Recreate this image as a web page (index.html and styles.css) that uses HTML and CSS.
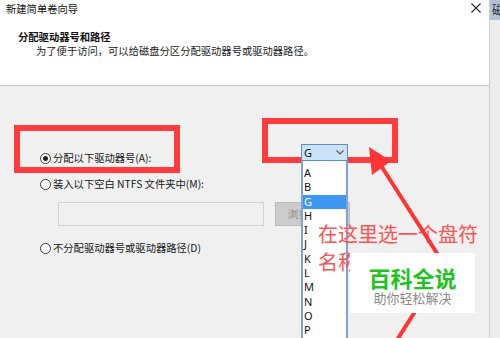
FILE: index.html
```html
<!DOCTYPE html>
<html lang="zh-CN">
<head>
<meta charset="utf-8">
<title>新建简单卷向导</title>
<link rel="stylesheet" href="styles.css">
</head>
<body>
<div class="screen">
  <div class="window">
    <header class="head">
      <div class="titlebar">
        <span class="title">新建简单卷向导</span>
        <svg class="close" width="10" height="10" viewBox="0 0 10 10"><path d="M0.5 0.5 L9.5 9.5 M9.5 0.5 L0.5 9.5" stroke="#2b2b2b" stroke-width="1.1" fill="none"/></svg>
      </div>
      <div class="h-title">分配驱动器号和路径</div>
      <div class="h-sub">为了便于访问，可以给磁盘分区分配驱动器号或驱动器路径。</div>
    </header>
    <main class="body">
      <div class="row1">
        <label class="radio"><span class="circle checked"></span>分配以下驱动器号(A):</label>
        <div class="select"><span>G</span><svg width="8" height="5" viewBox="0 0 8 5"><path d="M0.5 0.5 L4 4 L7.5 0.5" stroke="#555" stroke-width="1.1" fill="none"/></svg></div>
      </div>
      <label class="radio row2"><span class="circle"></span>装入以下空白 NTFS 文件夹中(M):</label>
      <div class="pathrow">
        <div class="input"></div>
        <div class="btn">浏览(R)...</div>
      </div>
      <label class="radio row3"><span class="circle"></span>不分配驱动器号或驱动器路径(D)</label>
    </main>
  </div>
  <div class="side"><div class="side-tab">磁盘</div></div>

  <div class="mark mark-a"></div>
  <div class="mark mark-b"></div>

  <ul class="listbox">
    <li>A</li><li>B</li><li class="sel">G</li><li>H</li><li>I</li><li>J</li><li>K</li><li>L</li><li>M</li><li>N</li><li>O</li><li>P</li><li>Q</li>
  </ul>

  <div class="note">在这里选一个盘符名称</div>

  <svg class="arrow" width="500" height="338" viewBox="0 0 500 338">
    <line x1="380" y1="164" x2="440" y2="258" stroke="#ff3434" stroke-width="4"/>
    <polygon points="369,147 391,161 372,175" fill="#ff3434"/>
    <line x1="416" y1="310" x2="397" y2="340" stroke="#ff3434" stroke-width="4"/>
  </svg>

  <div class="wm">
    <div class="wm-title">百科全说</div>
    <div class="wm-sub">助你轻松解决</div>
  </div>
</div>
</body>
</html>
```

FILE: styles.css
```css
* { box-sizing: border-box; margin: 0; padding: 0; }
body {
  margin: 0;
  width: 500px;
  height: 338px;
  overflow: hidden;
  font-family: "Noto Sans CJK SC", "Noto Sans", sans-serif;
  font-size: 10.3px;
  color: #161616;
}
.screen {
  position: relative;
  display: flex;
  width: 500px;
  height: 338px;
  overflow: hidden;
}
.window {
  width: 489px;
  display: flex;
  flex-direction: column;
  background: #f0f0f0;
}
.head {
  flex: none;
  height: 86px;
  background: #fff;
  border-bottom: 1px solid #c4c4c4;
}
.titlebar {
  display: flex;
  justify-content: space-between;
  align-items: center;
  height: 17px;
  padding: 0 8px 0 6px;
  line-height: 14px;
}
.title { color: #111; }
.close { margin-top: -2px; }
.h-title {
  font-weight: bold;
  margin: 13px 0 0 18px;
  line-height: 14px;
  color: #111;
}
.h-sub {
  margin-left: 36px;
  line-height: 14px;
  color: #222;
}
.body {
  flex: 1;
  padding: 58px 0 0 40px;
}
.row1 {
  display: flex;
  align-items: flex-start;
}
.radio {
  display: flex;
  align-items: center;
  gap: 2px;
  line-height: 14px;
  height: 14px;
  white-space: nowrap;
}
.row1 .radio {
  width: 261px;
  margin-top: 7px;
}
.circle {
  width: 11px;
  height: 11px;
  border: 1px solid #3a3a3a;
  border-radius: 50%;
  background: #fff;
  display: flex;
  align-items: center;
  justify-content: center;
  flex: none;
}
.circle.checked::after {
  content: "";
  width: 5px;
  height: 5px;
  border-radius: 50%;
  background: #222;
}
.select {
  position: relative;
  z-index: 2;
  width: 47px;
  height: 17px;
  background: #cce3f7;
  border: 1px solid #5a8fc8;
  display: flex;
  align-items: center;
  justify-content: space-between;
  padding: 0 3px 0 2px;
  font-family: "Noto Sans", sans-serif;
  font-size: 11px;
  color: #111;
}
.row2 { margin-top: 12px; }
.pathrow {
  display: flex;
  margin: 11px 0 0 18px;
  height: 24px;
}
.input {
  width: 206px;
  height: 24px;
  border: 1px solid #d2d2d2;
  background: #f0f0f0;
}
.btn {
  margin-left: 11px;
  width: 75px;
  height: 24px;
  background: #cccccc;
  border: 1px solid #bdbdbd;
  color: #8a8a8a;
  line-height: 22px;
  padding-left: 12px;
}
.row3 { margin-top: 15px; }

.side {
  width: 11px;
  background: #ececec;
  border-left: 1px solid #cdcdcd;
}
.side-tab {
  height: 20px;
  background: #b3c2d3;
  color: #1f2a36;
  font-size: 12px;
  line-height: 20px;
  padding-left: 2px;
  overflow: hidden;
  white-space: nowrap;
}

.mark {
  position: absolute;
  border: 6px solid #ff3b3b;
}
.mark-a { left: 14px; top: 125px; width: 166px; height: 48px; }
.mark-b { left: 262px; top: 118px; width: 136px; height: 45px; }

.listbox {
  position: absolute;
  z-index: 2;
  left: 301px;
  top: 161px;
  width: 47px;
  bottom: -30px;
  list-style: none;
  background: #fff;
  border: 2px solid #7ea3cf;
  border-top: none;
  padding-top: 5px;
  font-family: "Noto Sans", sans-serif;
  font-size: 11px;
  color: #111;
}
.listbox li {
  height: 14.3px;
  line-height: 14.3px;
  padding-left: 1px;
}
.listbox li.sel {
  background: #3b97ef;
  color: #fff;
}

.note {
  position: absolute;
  z-index: 3;
  left: 318px;
  top: 220px;
  width: 162px;
  font-size: 20px;
  line-height: 28px;
  color: #ff5252;
}
.arrow {
  position: absolute;
  z-index: 3;
  left: 0;
  top: 0;
  pointer-events: none;
}
.wm {
  position: absolute;
  z-index: 4;
  left: 350px;
  top: 253px;
  width: 125px;
  height: 60px;
  background: #fff;
  display: flex;
  flex-direction: column;
  align-items: center;
  padding-top: 11px;
}
.wm-title {
  font-size: 22px;
  font-weight: bold;
  line-height: 26px;
  color: #1ec41e;
}
.wm-sub {
  font-size: 13px;
  line-height: 16px;
  color: #8a8a8a;
}
```
